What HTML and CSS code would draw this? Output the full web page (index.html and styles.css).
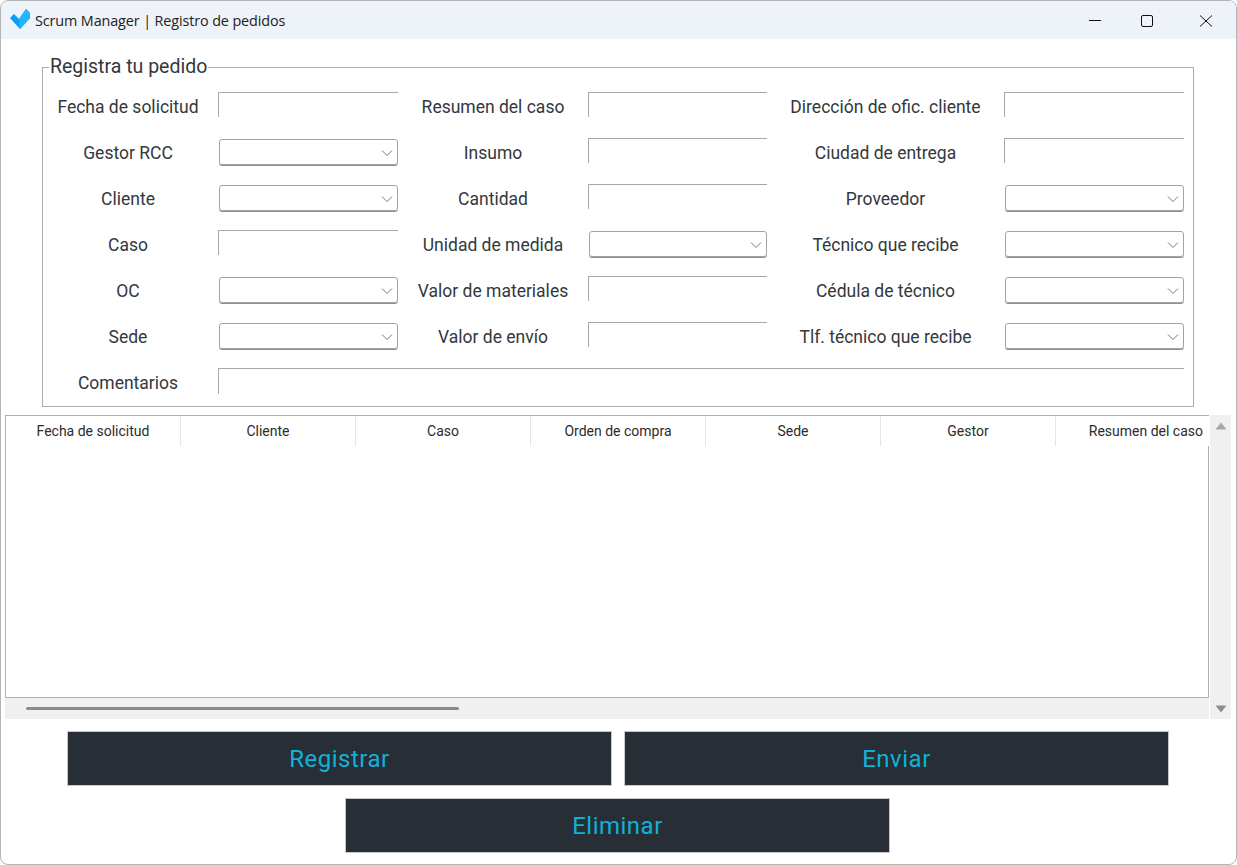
FILE: index.html
```html
<!DOCTYPE html>
<html lang="es">
<head>
<meta charset="utf-8">
<title>Scrum Manager | Registro de pedidos</title>
<link rel="stylesheet" href="styles.css">
</head>
<body>
<div class="window">
  <header class="titlebar">
    <svg class="app-icon" width="22" height="22" viewBox="0 0 22 22"><path d="M1 10 L5 6 L10 11 L17 1 L21 5 L21 10 L11 21 Z" fill="#0a9df0"/><path d="M10 11 L17 1 L21 5 L21 10 L11 21 Z" fill="#1fb6fb"/></svg>
    <span class="title">Scrum Manager | Registro de pedidos</span>
    <div class="controls">
      <svg width="46" height="38" viewBox="0 0 46 38"><path d="M17 19.5H29" stroke="#111" fill="none"/></svg>
      <svg width="58" height="38" viewBox="0 0 58 38"><rect x="23.5" y="14.5" width="11" height="11" rx="1.5" stroke="#111" fill="none"/></svg>
      <svg width="60" height="38" viewBox="0 0 60 38"><path d="M24 14.5L36 25.5M36 14.5L24 25.5" stroke="#111" fill="none"/></svg>
    </div>
  </header>
  <main class="content">
    <fieldset class="panel">
      <legend class="panel-title">Registra tu pedido</legend>
      <div class="form-grid">
        <label class="lbl lbl-first">Fecha de solicitud</label><div class="entry"></div>
        <label class="lbl">Resumen del caso</label><div class="entry"></div>
        <label class="lbl">Dirección de ofic. cliente</label><div class="entry"></div>

        <label class="lbl lbl-first">Gestor RCC</label><div class="combo"><svg class="chev" width="12" height="8" viewBox="0 0 12 8"><path d="M1 1.5L6 6.5L11 1.5" stroke="#777" fill="none"/></svg></div>
        <label class="lbl">Insumo</label><div class="entry"></div>
        <label class="lbl">Ciudad de entrega</label><div class="entry"></div>

        <label class="lbl lbl-first">Cliente</label><div class="combo"><svg class="chev" width="12" height="8" viewBox="0 0 12 8"><path d="M1 1.5L6 6.5L11 1.5" stroke="#777" fill="none"/></svg></div>
        <label class="lbl">Cantidad</label><div class="entry"></div>
        <label class="lbl">Proveedor</label><div class="combo"><svg class="chev" width="12" height="8" viewBox="0 0 12 8"><path d="M1 1.5L6 6.5L11 1.5" stroke="#777" fill="none"/></svg></div>

        <label class="lbl lbl-first">Caso</label><div class="entry"></div>
        <label class="lbl">Unidad de medida</label><div class="combo"><svg class="chev" width="12" height="8" viewBox="0 0 12 8"><path d="M1 1.5L6 6.5L11 1.5" stroke="#777" fill="none"/></svg></div>
        <label class="lbl">Técnico que recibe</label><div class="combo"><svg class="chev" width="12" height="8" viewBox="0 0 12 8"><path d="M1 1.5L6 6.5L11 1.5" stroke="#777" fill="none"/></svg></div>

        <label class="lbl lbl-first">OC</label><div class="combo"><svg class="chev" width="12" height="8" viewBox="0 0 12 8"><path d="M1 1.5L6 6.5L11 1.5" stroke="#777" fill="none"/></svg></div>
        <label class="lbl">Valor de materiales</label><div class="entry"></div>
        <label class="lbl">Cédula de técnico</label><div class="combo"><svg class="chev" width="12" height="8" viewBox="0 0 12 8"><path d="M1 1.5L6 6.5L11 1.5" stroke="#777" fill="none"/></svg></div>

        <label class="lbl lbl-first">Sede</label><div class="combo"><svg class="chev" width="12" height="8" viewBox="0 0 12 8"><path d="M1 1.5L6 6.5L11 1.5" stroke="#777" fill="none"/></svg></div>
        <label class="lbl">Valor de envío</label><div class="entry"></div>
        <label class="lbl">Tlf. técnico que recibe</label><div class="combo"><svg class="chev" width="12" height="8" viewBox="0 0 12 8"><path d="M1 1.5L6 6.5L11 1.5" stroke="#777" fill="none"/></svg></div>

        <label class="lbl lbl-first">Comentarios</label><div class="entry entry-wide"></div>
      </div>
    </fieldset>

    <section class="table-area">
      <div class="table-main">
        <div class="table-box">
          <div class="thead">
            <div class="th">Fecha de solicitud</div>
            <div class="th">Cliente</div>
            <div class="th">Caso</div>
            <div class="th">Orden de compra</div>
            <div class="th">Sede</div>
            <div class="th">Gestor</div>
            <div class="th th-last">Resumen del caso</div>
          </div>
          <div class="tbody"></div>
        </div>
        <div class="hscroll"><div class="hthumb"></div></div>
      </div>
      <div class="vscroll">
        <svg width="12" height="8" viewBox="0 0 12 8"><path d="M6 0.5L11.5 7.5H0.5Z" fill="#a6a6a6"/></svg>
        <svg width="12" height="8" viewBox="0 0 12 8"><path d="M6 7.5L11.5 0.5H0.5Z" fill="#8e8e8e"/></svg>
      </div>
    </section>

    <div class="actions">
      <button class="btn">Registrar</button>
      <button class="btn">Enviar</button>
      <button class="btn">Eliminar</button>
    </div>
  </main>
</div>
</body>
</html>
```
FILE: styles.css
```css
* { box-sizing: border-box; }
html, body { margin: 0; padding: 0; background: #fff; }
body { font-family: Roboto, "Liberation Sans", sans-serif; overflow: hidden; }

.window {
  width: 1237px;
  height: 865px;
  display: flex;
  flex-direction: column;
  background: #fff;
  border: 1px solid #b4b4b4;
  border-radius: 8px;
  overflow: hidden;
}

.titlebar {
  height: 38px;
  flex: none;
  display: flex;
  align-items: center;
  background: #eef2f9;
  padding-left: 8px;
}
.app-icon { flex: none; margin-top: -2px; }
.title { margin-left: 4px; font: 14.4px "Open Sans", "Noto Sans", sans-serif; color: #222; white-space: nowrap; letter-spacing: -0.12px; }
.controls { margin-left: auto; display: flex; }
.controls svg { display: block; }

.content { flex: 1; display: flex; flex-direction: column; }

.panel {
  margin: 16px 0 0 41px;
  padding: 0;
  width: 1152px;
  height: 352px;
  border: 2px solid #adadad;
  border-width: 1.5px;
  min-width: 0;
}
.panel-title {
  margin-left: 6px;
  padding: 0 1px;
  font-size: 19.5px;
  line-height: 24px;
  color: #33383d;
}

.form-grid {
  display: grid;
  grid-template-columns: 175px 180px 190px 179px 237px 180px;
  grid-auto-rows: 46px;
  margin-top: 13px;
}
.lbl {
  display: flex;
  align-items: center;
  justify-content: center;
  height: 28px;
  padding-top: 2px;
  font-size: 17.5px;
  color: #33383d;
  white-space: nowrap;
}
.lbl-first { padding-right: 5px; }
.entry {
  height: 25px;
  border-top: 1.5px solid #a8a8a8;
  border-left: 1.5px solid #a8a8a8;
}
.entry-wide { grid-column: 2 / 7; height: 26px; }
.combo {
  position: relative;
  height: 26px;
  margin: 1px 0 0 1px;
  border: 1px solid #a3a3a3;
  border-radius: 3px;
  box-shadow: 0 1px 0 #8f8f8f;
}
.chev { position: absolute; right: 4px; top: 9px; }

.table-area {
  display: flex;
  margin: 8px 0 0 4px;
  width: 1226px;
  height: 304px;
}
.table-main { width: 1205px; display: flex; flex-direction: column; }
.table-box {
  height: 283px;
  border-left: 1.5px solid #aab0b5;
  border-top: 1.5px solid #aab0b5;
  border-bottom: 1.5px solid #aab0b5;
  display: flex;
  flex-direction: column;
}
.thead { display: flex; height: 30px; flex: none; padding-left: 0; }
.th {
  width: 175px;
  flex: none;
  display: flex;
  align-items: center;
  justify-content: center;
  font-size: 14px;
  color: #2b2b2b;
  border-right: 1px solid #e6e6e6;
  white-space: nowrap;
}
.th-last { width: 153px; border-right: none; justify-content: flex-end; padding-right: 6px; }
.tbody { flex: 1; border-right: 1.5px solid #aab0b5; }
.hscroll {
  flex: 1;
  background: #f0f0f0;
  padding: 9px 0 0 21px;
}
.hthumb { width: 433px; height: 3px; background: #8b8b8b; border-radius: 2px; }
.vscroll {
  width: 21px;
  margin-left: 1px;
  background: #f0f0f0;
  display: flex;
  flex-direction: column;
  justify-content: space-between;
  align-items: center;
  padding: 7px 0 6px;
}
.vscroll svg { display: block; }

.actions {
  display: grid;
  grid-template-columns: 545px 545px;
  column-gap: 12px;
  row-gap: 12px;
  margin: 12px 0 0 66px;
}
.btn {
  height: 55px;
  padding: 0;
  background: #272e36;
  border: 1px solid #c8c8c8;
  color: #0fb2d8;
  font: 24px Roboto, "Liberation Sans", sans-serif;
  letter-spacing: 0.5px;
}
.btn:last-child { grid-column: 1 / 3; justify-self: center; width: 545px; margin-left: -1px; }
```
